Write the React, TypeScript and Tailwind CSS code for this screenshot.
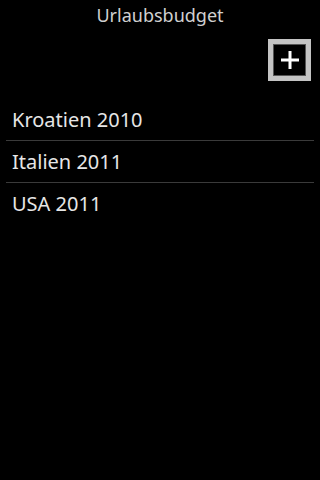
const trips = ["Kroatien 2010", "Italien 2011", "USA 2011"];

export default function App() {
  return (
    <div className="w-[320px] h-[480px] bg-black text-[#e6e6e6] font-['Noto_Sans',sans-serif] flex flex-col">
      <div className="h-[30px] flex items-center justify-center text-[18px] text-[#d0d0d0]">Urlaubsbudget</div>

      <div className="flex justify-end pr-[9px] pt-[9px]">
        <button className="w-[43px] h-[42px] bg-[#c4c4c4] p-[5px] flex">
          <span className="flex-1 bg-black border border-[#555] flex items-center justify-center">
            <svg width="18" height="18" viewBox="0 0 18 18">
              <rect x="7.5" y="0" width="3" height="18" fill="#fff" />
              <rect x="0" y="7.5" width="18" height="3" fill="#fff" />
            </svg>
          </span>
        </button>
      </div>

      <ul className="px-[6px] mt-[18px]">
        {trips.map((t, i) => (
          <li
            key={t}
            className={`h-[42px] flex items-center px-[6px] text-[20px] ${
              i < trips.length - 1 ? "border-b border-[#3a3a3a]" : ""
            }`}
          >
            {t}
          </li>
        ))}
      </ul>
    </div>
  );
}
